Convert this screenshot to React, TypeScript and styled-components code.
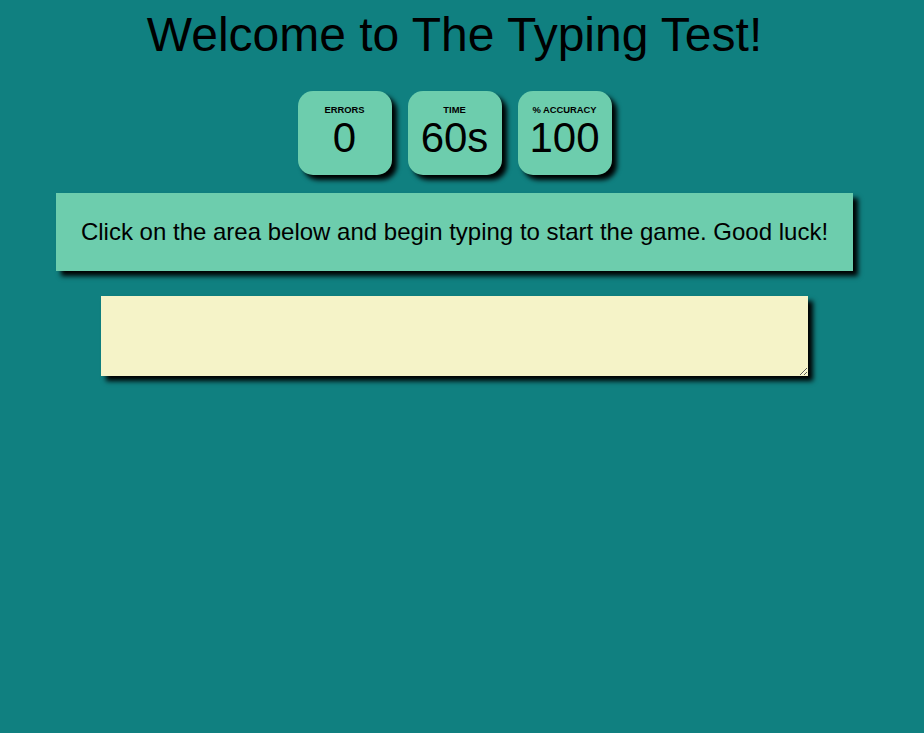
import React from "react";
import styled, { createGlobalStyle } from "styled-components";

const GlobalStyle = createGlobalStyle`
  html, body {
    margin: 0;
    padding: 0;
    background: #108080;
    font-family: "Liberation Sans", Arial, sans-serif;
    color: #000;
  }
`;

const Page = styled.div`
  width: 909px;
  min-height: 733px;
  display: flex;
  flex-direction: column;
  align-items: center;
  box-sizing: border-box;
  padding-top: 7px;
`;

const Title = styled.h1`
  margin: 0;
  font-size: 48px;
  font-weight: 400;
  line-height: 55px;
`;

const StatRow = styled.div`
  display: flex;
  gap: 16px;
  margin-top: 29px;
`;

const StatCard = styled.div`
  width: 94px;
  height: 84px;
  box-sizing: border-box;
  padding-top: 13px;
  background: #6dcdad;
  border-radius: 15px;
  box-shadow: 5px 5px 5px #000;
  display: flex;
  flex-direction: column;
  align-items: center;
`;

const StatLabel = styled.div`
  font-size: 9.4px;
  font-weight: 700;
  line-height: 11px;
  text-transform: uppercase;
`;

const StatValue = styled.div`
  font-size: 42px;
  line-height: 46px;
`;

const Instructions = styled.p`
  align-self: stretch;
  margin: 18px 56px 0;
  padding: 25px 0;
  background: #6dcdad;
  box-shadow: 5px 5px 5px #000;
  font-size: 24px;
  line-height: 28px;
  text-align: center;
`;

const TypingArea = styled.textarea`
  display: block;
  width: 707px;
  height: 80px;
  box-sizing: border-box;
  margin-top: 25px;
  border: none;
  outline: none;
  background: #f5f3c8;
  box-shadow: 5px 5px 5px #000;
  font-family: "Liberation Sans", Arial, sans-serif;
  font-size: 16px;
  padding: 4px;
`;

const stats = [
  { label: "Errors", value: "0" },
  { label: "Time", value: "60s" },
  { label: "% Accuracy", value: "100" },
];

export default function App() {
  return (
    <>
      <GlobalStyle />
      <Page>
        <Title>Welcome to The Typing Test!</Title>
        <StatRow>
          {stats.map((s) => (
            <StatCard key={s.label}>
              <StatLabel>{s.label}</StatLabel>
              <StatValue>{s.value}</StatValue>
            </StatCard>
          ))}
        </StatRow>
        <Instructions>
          Click on the area below and begin typing to start the game. Good luck!
        </Instructions>
        <TypingArea />
      </Page>
    </>
  );
}
